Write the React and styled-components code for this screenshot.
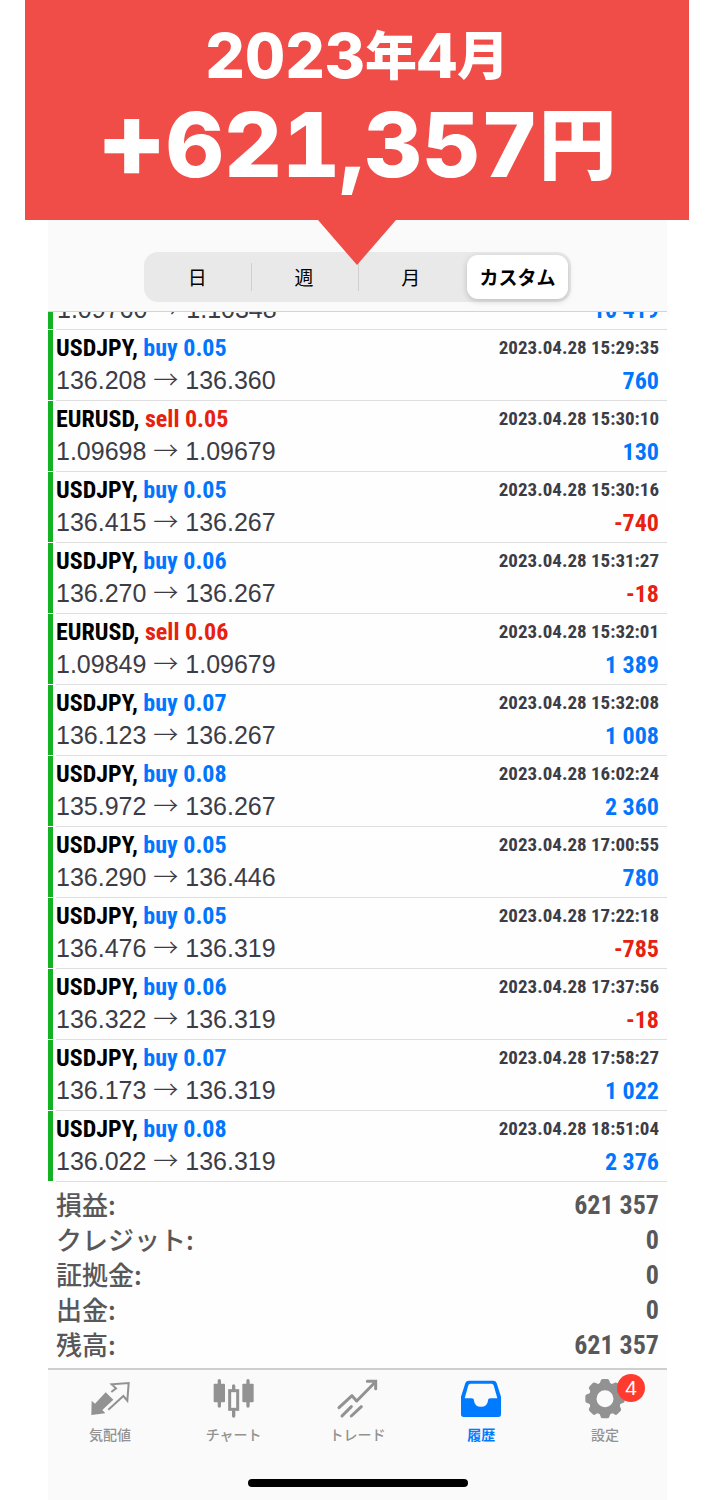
import styled, { createGlobalStyle } from "styled-components";

const trades = [
  { symbol: "USDJPY", side: "buy", lot: "0.05", open: "136.208", close: "136.360", time: "2023.04.28 15:29:35", profit: "760" },
  { symbol: "EURUSD", side: "sell", lot: "0.05", open: "1.09698", close: "1.09679", time: "2023.04.28 15:30:10", profit: "130" },
  { symbol: "USDJPY", side: "buy", lot: "0.05", open: "136.415", close: "136.267", time: "2023.04.28 15:30:16", profit: "-740" },
  { symbol: "USDJPY", side: "buy", lot: "0.06", open: "136.270", close: "136.267", time: "2023.04.28 15:31:27", profit: "-18" },
  { symbol: "EURUSD", side: "sell", lot: "0.06", open: "1.09849", close: "1.09679", time: "2023.04.28 15:32:01", profit: "1 389" },
  { symbol: "USDJPY", side: "buy", lot: "0.07", open: "136.123", close: "136.267", time: "2023.04.28 15:32:08", profit: "1 008" },
  { symbol: "USDJPY", side: "buy", lot: "0.08", open: "135.972", close: "136.267", time: "2023.04.28 16:02:24", profit: "2 360" },
  { symbol: "USDJPY", side: "buy", lot: "0.05", open: "136.290", close: "136.446", time: "2023.04.28 17:00:55", profit: "780" },
  { symbol: "USDJPY", side: "buy", lot: "0.05", open: "136.476", close: "136.319", time: "2023.04.28 17:22:18", profit: "-785" },
  { symbol: "USDJPY", side: "buy", lot: "0.06", open: "136.322", close: "136.319", time: "2023.04.28 17:37:56", profit: "-18" },
  { symbol: "USDJPY", side: "buy", lot: "0.07", open: "136.173", close: "136.319", time: "2023.04.28 17:58:27", profit: "1 022" },
  { symbol: "USDJPY", side: "buy", lot: "0.08", open: "136.022", close: "136.319", time: "2023.04.28 18:51:04", profit: "2 376" },
];

const totals = [
  ["損益:", "621 357"],
  ["クレジット:", "0"],
  ["証拠金:", "0"],
  ["出金:", "0"],
  ["残高:", "621 357"],
];

const periods = ["日", "週", "月", "カスタム"];

const QuotesIcon = () => (
  <Icon viewBox="0 0 126 126">
    <path d="M8 68 L18 77 L50 43 L73 65 L40 96 L49 106 L7 111 Z" fill="currentColor" />
    <path
      d="M58 95 L103 54 L115 68 L119 15 L68 19 L81 31 L67 42"
      fill="none"
      stroke="currentColor"
      strokeWidth="6"
    />
  </Icon>
);

const ChartIcon = () => (
  <Icon viewBox="0 0 126 126">
    <g fill="none" stroke="currentColor" strokeLinecap="round" strokeWidth="10">
      <path d="M19 8 V84 M105 8 V84 M62 24 V36 M62 98 V114" />
    </g>
    <rect x="2" y="17" width="34" height="56" rx="3" fill="currentColor" />
    <rect x="88" y="17" width="34" height="56" rx="3" fill="currentColor" />
    <rect x="50" y="38" width="24" height="56" fill="none" stroke="currentColor" strokeWidth="9" />
  </Icon>
);

const TradeIcon = () => (
  <Icon viewBox="0 0 126 126">
    <g fill="none" stroke="currentColor" strokeLinecap="round" strokeWidth="9">
      <path d="M27 89 L66 53 L80 69 L136 12" strokeLinejoin="round" transform="translate(-18 0)" />
      <path d="M94 10 H119 V32 M18 114 L46 86 M46 114 L76 86" />
    </g>
  </Icon>
);

const HistoryIcon = () => (
  <Icon viewBox="0 0 126 126">
    <path
      d="M26 8 H100 Q107 8 110 15 L123 56 V109 Q123 117 115 117 H11 Q3 117 3 109 V56 L16 15 Q19 8 26 8 Z M31 17 Q27 17 25 22 L14 61 H34 Q42 61 42 68 Q44 86 63 86 Q82 86 84 68 Q84 61 92 61 H112 L101 22 Q99 17 95 17 Z"
      fill="currentColor"
      fillRule="evenodd"
    />
  </Icon>
);

const SettingsIcon = () => (
  <Icon viewBox="0 0 126 126">
    <circle cx="63" cy="62" r="37" fill="none" stroke="currentColor" strokeWidth="23" />
    {[0, 45, 90, 135, 180, 225, 270, 315].map((angle) => (
      <path
        key={angle}
        d="M43 19 Q49 16 50 8 Q51 3 56 3 H70 Q75 3 76 8 Q77 16 83 19 Z"
        fill="currentColor"
        transform={`rotate(${angle} 63 62)`}
      />
    ))}
  </Icon>
);

const tabs = [
  { label: "気配値", Glyph: QuotesIcon },
  { label: "チャート", Glyph: ChartIcon },
  { label: "トレード", Glyph: TradeIcon },
  { label: "履歴", Glyph: HistoryIcon, active: true },
  { label: "設定", Glyph: SettingsIcon, badge: 4 },
];

const Prices = ({ open, close }) => (
  <Price>
    {open} <Arrow>→</Arrow> {close}
  </Price>
);

const Trade = ({ trade }) => (
  <Row>
    <Line>
      <Symbol>
        {trade.symbol}, <Side $side={trade.side}>{trade.side} {trade.lot}</Side>
      </Symbol>
      <Time>{trade.time}</Time>
    </Line>
    <Line>
      <Prices open={trade.open} close={trade.close} />
      <Profit $loss={trade.profit.startsWith("-")}>{trade.profit}</Profit>
    </Line>
  </Row>
);

const App = () => (
  <>
    <GlobalStyle />
    <Banner>
      <Month>
        2023<Kanji>年</Kanji>4<Kanji>月</Kanji>
      </Month>
      <Amount>
        <Plus>+</Plus>621,357<Kanji>円</Kanji>
      </Amount>
    </Banner>
    <Phone>
      <Header>
        <Segments>
          {periods.map((period) => (
            <Segment key={period} type="button" aria-pressed={period === "カスタム"}>
              {period}
            </Segment>
          ))}
        </Segments>
      </Header>
      <ScrolledRow>
        <Line>
          <Prices open="1.09760" close="1.10348" />
          <Profit>10 419</Profit>
        </Line>
      </ScrolledRow>
      <List>
        {trades.map((trade) => (
          <Trade key={trade.time} trade={trade} />
        ))}
      </List>
      <Totals>
        {totals.map(([label, value]) => (
          <Total key={label}>
            <dt>{label}</dt>
            <dd>{value}</dd>
          </Total>
        ))}
      </Totals>
      <TabBar>
        {tabs.map(({ label, Glyph, active, badge }) => (
          <Tab key={label} href="#" $active={active}>
            <Glyph />
            <span>{label}</span>
            {badge && <Badge>{badge}</Badge>}
          </Tab>
        ))}
      </TabBar>
      <HomeArea>
        <HomeIndicator />
      </HomeArea>
    </Phone>
  </>
);

const narrow = `"Roboto Condensed", Roboto, sans-serif`;
const japanese = `"Noto Sans CJK JP", sans-serif`;
const divider = `linear-gradient(#dedede, #dedede) 8px 0 / 100% 1px no-repeat`;
const blue = "#0076ff";
const red = "#e8200f";

const GlobalStyle = createGlobalStyle`
  * {
    box-sizing: border-box;
  }

  body {
    margin: 0;
    background: #fff;
    font-family: "Liberation Sans", "Noto Sans CJK JP", sans-serif;
  }
`;

const Banner = styled.header`
  position: relative;
  z-index: 1;
  margin: 0 25px;
  padding: 16px 0 26px;
  background: #f04c48;
  color: #fff;
  font-family: Inter, "Noto Sans CJK JP", sans-serif;
  font-weight: 800;
  font-variant-numeric: tabular-nums;
  text-align: center;

  &::after {
    content: "";
    position: absolute;
    top: 100%;
    left: 50%;
    width: 78px;
    height: 45px;
    margin-left: -39px;
    background: #f04c48;
    clip-path: polygon(0 0, 100% 0, 50% 100%);
  }
`;

const Month = styled.h1`
  margin: 0;
  font-size: 62px;
  font-weight: inherit;
  line-height: 80px;
`;

const Amount = styled.p`
  margin: 0;
  font-size: 90px;
  line-height: 98px;
`;

const Plus = styled.span`
  font-size: 106px;
  line-height: 1px;
`;

const Kanji = styled.span`
  font-family: ${japanese};
  line-height: 1;
  vertical-align: 3px;

  ${Month} & {
    font-size: 52px;
  }

  ${Amount} & {
    font-size: 78px;
  }
`;

const Phone = styled.main`
  margin: 0 47px 0 48px;
  background: #fefefe;
`;

const Header = styled.div`
  display: flex;
  justify-content: center;
  padding: 32px 16px 9px;
  background: #fafafa;
  border-bottom: 1px solid #d4d4d4;
`;

const Segments = styled.div`
  display: grid;
  grid-template-columns: repeat(4, 1fr);
  width: 100%;
  max-width: 427px;
  height: 50px;
  padding: 3px 0;
  border-radius: 14px;
  background: #e9e9ea;
`;

const Segment = styled.button`
  position: relative;
  padding: 0;
  border: 0;
  border-radius: 11px;
  background: none;
  color: #000;
  font-family: ${japanese};
  font-size: 19px;
  line-height: 26px;

  &:nth-child(2)::before,
  &:nth-child(3)::before {
    content: "";
    position: absolute;
    left: 0;
    top: 8px;
    bottom: 8px;
    width: 1px;
    background: #cfcfd3;
  }

  &[aria-pressed="true"] {
    margin: 0 3px;
    background: #fff;
    font-weight: 700;
    box-shadow: 0 2px 6px #00000030;
  }
`;

const Line = styled.div`
  display: flex;
  flex-shrink: 0;
  justify-content: space-between;
  align-items: center;
  height: 33px;
`;

const ScrolledRow = styled.div`
  display: flex;
  flex-direction: column;
  justify-content: flex-end;
  height: 17px;
  padding: 0 8px 3px 4px;
  border-left: 5px solid #12b223;
  overflow: hidden;
`;

const List = styled.ul`
  margin: 0;
  padding: 0;
  list-style: none;
`;

const Row = styled.li`
  padding: 2px 8px 3px;
  background: ${divider}, linear-gradient(#12b223, #12b223) 0 1px / 5px 100% no-repeat;
`;

const Symbol = styled.span`
  font-family: ${narrow};
  font-size: 24px;
  font-weight: 700;
`;

const Side = styled.span`
  color: ${({ $side }) => ($side === "buy" ? blue : red)};
`;

const Time = styled.time`
  color: #3c3c46;
  font-family: ${narrow};
  font-size: 19px;
  font-weight: 700;
`;

const Price = styled.span`
  color: #3c3c46;
  font-size: 25px;
`;

const Arrow = styled.span`
  font-family: ${japanese};
  font-weight: 300;
  line-height: 1;
`;

const Profit = styled.span`
  color: ${({ $loss }) => ($loss ? red : blue)};
  font-family: ${narrow};
  font-size: 24px;
  font-weight: 700;
`;

const Totals = styled.dl`
  margin: 0;
  padding: 7px 8px 5px;
  background: ${divider};
  color: #58585a;
  font-size: 26px;
`;

const Total = styled.div`
  display: flex;
  justify-content: space-between;
  line-height: 35px;

  dt {
    font-family: ${japanese};
    font-weight: 500;
    line-height: 32px;
  }

  dd {
    margin: 0;
    font-family: ${narrow};
    font-weight: 700;
  }
`;

const TabBar = styled.nav`
  display: grid;
  grid-template-columns: repeat(5, 1fr);
  padding-top: 8px;
  border-top: 2px solid #cfcfcf;
  background: #fafafa;
`;

const Tab = styled.a`
  position: relative;
  display: flex;
  flex-direction: column;
  align-items: center;
  color: ${({ $active }) => ($active ? "#007aff" : "#929292")};
  font-family: ${japanese};
  font-size: 14px;
  font-weight: ${({ $active }) => ($active ? 700 : 500)};
  line-height: 28px;
  text-decoration: none;
`;

const Icon = styled.svg`
  width: 42px;
  height: 42px;
`;

const Badge = styled.span`
  position: absolute;
  top: -4px;
  left: 50%;
  width: 28px;
  height: 28px;
  margin-left: 12px;
  border-radius: 50%;
  background: #ff3b30;
  color: #fff;
  font-family: "Liberation Sans", sans-serif;
  font-size: 21px;
  font-weight: 400;
  text-align: center;
`;

const HomeArea = styled.div`
  display: flex;
  justify-content: center;
  padding: 31px 0 13px;
  background: #fafafa;
`;

const HomeIndicator = styled.div`
  width: 220px;
  height: 8px;
  border-radius: 4px;
  background: #000;
`;

export default App;
